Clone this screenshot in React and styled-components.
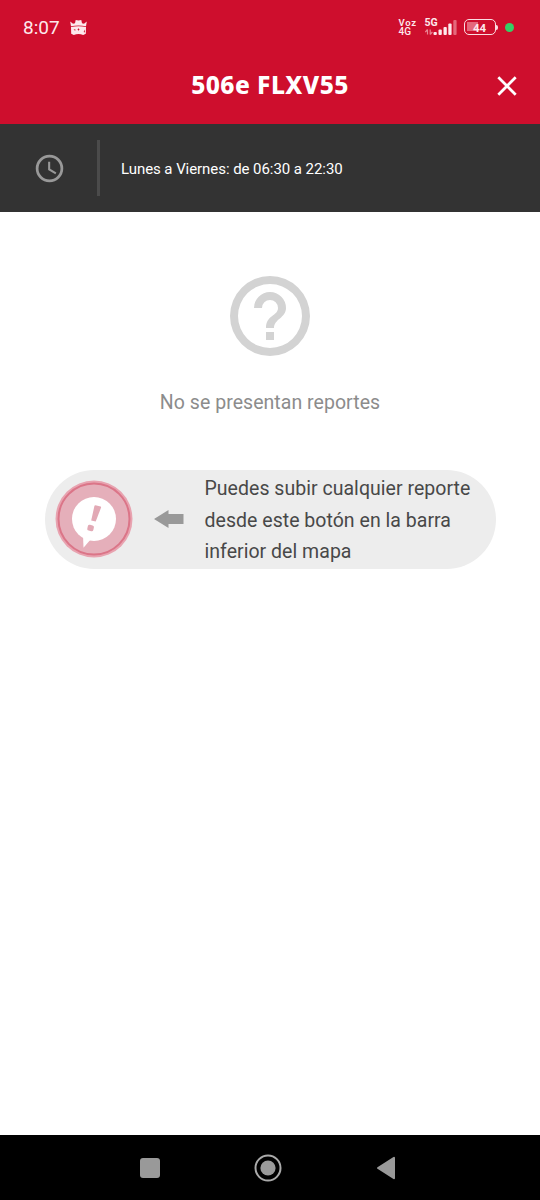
import React from 'react';
import styled, { createGlobalStyle } from 'styled-components';

const GlobalStyle = createGlobalStyle`
    body {
        margin: 0;
        background: #fff;
        font-family: Roboto, "Liberation Sans", sans-serif;
    }

    svg {
        display: block;
        flex: none;
    }
`;

const Screen = styled.div`
    display: flex;
    flex-direction: column;
    width: 540px;
    height: 1200px;
    overflow: hidden;
    background: #fff;
`;

const Header = styled.header`
    height: 124px;
    color: #fff;
    background: #ce0e2d;
`;

const StatusBar = styled.div`
    display: flex;
    align-items: center;
    height: 54px;
    padding: 0 26px 0 23px;
    box-sizing: border-box;
    color: #fde9ec;
`;

const Time = styled.span`
    width: 47px;
    font-size: 19px;
    line-height: 22px;
    padding-top: 1px;
`;

const Voice = styled.div`
    display: flex;
    flex-direction: column;
    margin-left: auto;
    width: 26px;
    font: 600 9.5px/9px Roboto, sans-serif;
    letter-spacing: 0.7px;
`;

const VoiceLine = styled.span`
    display: block;
    height: 9px;

    & + & {
        font-size: 10px;
        font-weight: 500;
        letter-spacing: 0;
    }
`;

const Signal = styled.div`
    width: 32px;
    height: 18px;
    margin-right: 7px;
    font: 700 10.5px/9px Roboto, sans-serif;

    svg {
        margin-top: -7px;
    }
`;

const Battery = styled.div`
    display: flex;
    align-items: center;
    justify-content: center;
    width: 32px;
    height: 16px;
    box-sizing: border-box;
    border: 1.5px solid #fbdde2;
    border-radius: 5px;
    background: linear-gradient(#e4687b, #e4687b) 2px 2px / 11px 9px no-repeat;
    font: 700 11.5px/14px Roboto, sans-serif;
    padding-top: 1px;
`;

const BatteryTip = styled.i`
    width: 2px;
    height: 5px;
    margin: 0 7px 0 0.5px;
    border-radius: 0 2px 2px 0;
    background: #fbdde2;
`;

const Dot = styled.i`
    width: 9px;
    height: 9px;
    border-radius: 50%;
    background: #35d066;
`;

const TitleBar = styled.div`
    display: grid;
    grid-template-columns: 66px 1fr 66px;
    align-items: center;
    height: 62px;
    color: #fff;
`;

const Title = styled.h1`
    grid-column: 2;
    margin: 0;
    text-align: center;
    font: 800 24.5px/32px "Noto Sans", sans-serif;
    letter-spacing: 0.45px;
`;

const CloseButton = styled.button`
    display: flex;
    justify-content: center;
    padding: 1px 0 0;
    border: 0;
    color: inherit;
    background: none;
`;

const Schedule = styled.div`
    display: flex;
    align-items: center;
    height: 88px;
    color: #fff;
    background: #333;
`;

const ClockCell = styled.div`
    display: flex;
    justify-content: flex-end;
    width: 66px;
    margin-right: 31px;
`;

const Divider = styled.div`
    width: 3px;
    height: 56px;
    margin-right: 21px;
    background: #4b4b4b;
`;

const Hours = styled.span`
    font-size: 15px;
    line-height: 20px;
    letter-spacing: -0.06px;
    padding-top: 1px;
`;

const Content = styled.main`
    display: flex;
    flex: 1;
    flex-direction: column;
    align-items: center;
    padding-top: 56px;
`;

const EmptyText = styled.p`
    margin: 25.5px 0 54px;
    color: #8c8c8c;
    font-size: 19.5px;
    line-height: 26px;
    letter-spacing: 0.04px;
`;

const Hint = styled.div`
    display: flex;
    align-items: center;
    width: 451px;
    height: 99px;
    padding-left: 10px;
    box-sizing: border-box;
    border-radius: 50px;
    background: #ededed;
`;

const HintText = styled.p`
    margin: 0 0 0 21px;
    padding-top: 3px;
    color: #484848;
    font-size: 19.5px;
    line-height: 31.5px;
    letter-spacing: 0.03px;
    white-space: nowrap;
`;

const Arrow = styled.svg`
    margin-left: 21px;
`;

const NavBar = styled.nav`
    display: flex;
    align-items: center;
    justify-content: space-between;
    height: 65px;
    padding: 0 144px 0 140px;
    box-sizing: border-box;
    background: #000;
`;

const KnightIcon = () => (
    <svg width="17" height="17" viewBox="0 0 17 17" fill="#fde9ec">
        <path d="M.2 2.400 3 4.700 5 4.300 5.700 1Q8.500 1.800 11.300 1L12 4.300 14 4.700 16.800 2.400 16 7.200Q8.500 5.600 1 7.200Z" />
        <path
            fillRule="evenodd"
            d="M1 8.100Q8.500 6.500 16 8.100L15.800 14.800 13.200 16Q8.500 14 3.800 16L1.200 14.800ZM3.600 10 6.200 10.900 4.600 11.400ZM8.500 9.300 7.500 10.500 8.500 11.700 9.500 10.500ZM13.600 13 15 10.600 14.800 13.400Z"
        />
    </svg>
);

const SignalIcon = () => (
    <svg width="32" height="16" viewBox="0 0 32 16" fill="#fde9ec">
        <path
            d="M2.500 14.500V9.500M.3 12.200 2.500 9.500M5.200 9.500V14.500M5.200 14.500 7.400 11.800"
            fill="none"
            stroke="#ea8594"
            strokeWidth="1.200"
        />
        <rect x="8.500" y="12" width="3.300" height="3" rx="1" />
        <rect x="13.500" y="9.500" width="3.300" height="5.500" rx="1" />
        <rect x="18.500" y="7" width="3.300" height="8" rx="1" />
        <rect x="23.300" y="3.500" width="3.300" height="11.500" rx="1" />
        <rect x="28.300" y="0" width="3.300" height="15" rx="1" fill="#e4687b" />
    </svg>
);

const CloseIcon = () => (
    <svg width="22" height="22" viewBox="0 0 22 22">
        <path d="M2.300 2.300 19.700 19.700M19.700 2.300 2.300 19.700" stroke="currentColor" strokeWidth="2.700" />
    </svg>
);

const ClockIcon = () => (
    <svg width="33" height="33" viewBox="0 0 24 24" fill="#999">
        <path d="M12 2a10 10 0 1 0 0 20 10 10 0 0 0 0-20Zm0 18a8 8 0 1 1 0-16 8 8 0 0 1 0 16Zm.5-13H11v6l5.250 3.150.75-1.230-4.500-2.670Z" />
    </svg>
);

const HelpIcon = () => (
    <svg width="96" height="96" viewBox="0 0 24 24" fill="#d3d3d3">
        <path d="M11 18h2v-2h-2v2Zm1-16a10 10 0 1 0 0 20 10 10 0 0 0 0-20Zm0 18a8 8 0 1 1 0-16 8 8 0 0 1 0 16Zm0-14a4 4 0 0 0-4 4h2a2 2 0 1 1 4 0c0 2-3 1.750-3 5h2c0-2.250 3-2.500 3-5a4 4 0 0 0-4-4Z" />
    </svg>
);

const ReportIcon = () => (
    <svg width="78" height="78" viewBox="0 0 78 78">
        <circle cx="39" cy="39" r="38.500" fill="#e8a3b0" />
        <circle cx="39" cy="39" r="35.500" fill="#e5afba" stroke="#db7588" strokeWidth="2" />
        <circle cx="39" cy="39" r="22" fill="#fff" />
        <path d="M28 55 28.500 67.800 36 59Z" fill="#fff" />
        <path d="M40.500 25.300 45.600 26.600Q46.200 27 46 27.700L40.700 41.500 36.200 40.400 39.400 26.100Q39.700 25.200 40.500 25.300Z" fill="#e2a9b5" />
        <rect x="32.500" y="45" width="6.200" height="6" rx="1.800" transform="rotate(14 35.600 48)" fill="#e2a9b5" />
    </svg>
);

const App = () => (
    <Screen>
        <GlobalStyle />
        <Header>
            <StatusBar>
                <Time>8:07</Time>
                <KnightIcon />
                <Voice>
                    <VoiceLine>Voz</VoiceLine>
                    <VoiceLine>4G</VoiceLine>
                </Voice>
                <Signal>5G<SignalIcon /></Signal>
                <Battery>44</Battery>
                <BatteryTip />
                <Dot />
            </StatusBar>
            <TitleBar>
                <Title>506e FLXV55</Title>
                <CloseButton aria-label="Cerrar"><CloseIcon /></CloseButton>
            </TitleBar>
        </Header>
        <Schedule>
            <ClockCell><ClockIcon /></ClockCell>
            <Divider />
            <Hours>Lunes a Viernes: de 06:30 a 22:30</Hours>
        </Schedule>
        <Content>
            <HelpIcon />
            <EmptyText>No se presentan reportes</EmptyText>
            <Hint>
                <ReportIcon />
                <Arrow width="30" height="18" viewBox="0 0 30 18">
                    <path d="M0 9 14.500 0V4H29.500V14H14.500V18Z" fill="#999" />
                </Arrow>
                <HintText>
                    Puedes subir cualquier reporte<br />
                    desde este botón en la barra<br />
                    inferior del mapa
                </HintText>
            </Hint>
        </Content>
        <NavBar>
            <svg width="20" height="20" viewBox="0 0 20 20">
                <rect width="20" height="20" rx="3" fill="#999" />
            </svg>
            <svg width="28" height="28" viewBox="0 0 28 28">
                <circle cx="14" cy="14" r="12.500" fill="none" stroke="#aaa" strokeWidth="2" />
                <circle cx="14" cy="14" r="7.600" fill="#999" />
            </svg>
            <svg width="20" height="24" viewBox="0 0 20 24">
                <path d="M2 12 18 1.800V22.200Z" fill="#999" stroke="#999" strokeWidth="2" strokeLinejoin="round" />
            </svg>
        </NavBar>
    </Screen>
);

export default App;
